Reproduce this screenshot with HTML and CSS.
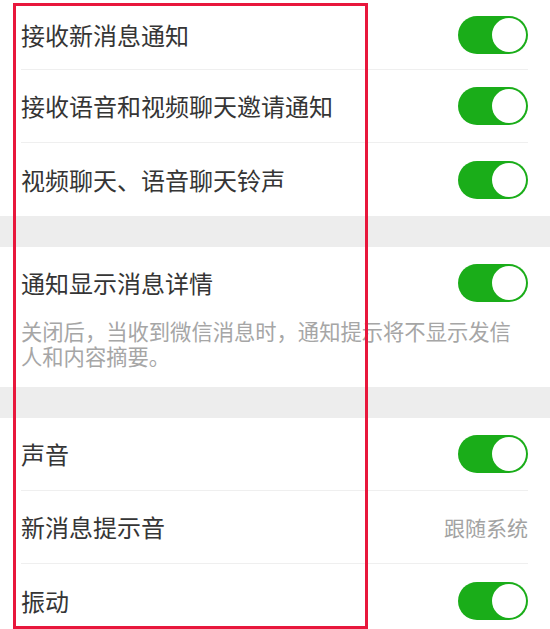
FILE: index.html
```html
<!DOCTYPE html>
<html lang="zh-CN">
<head>
<meta charset="utf-8">
<title>新消息通知</title>
<link rel="stylesheet" href="styles.css">
</head>
<body>
<div class="page">
  <section class="group">
    <div class="row row-first">
      <span class="label">接收新消息通知</span>
      <span class="switch on"><span class="knob"></span></span>
    </div>
    <div class="row">
      <span class="label">接收语音和视频聊天邀请通知</span>
      <span class="switch on"><span class="knob"></span></span>
    </div>
    <div class="row row-last">
      <span class="label">视频聊天、语音聊天铃声</span>
      <span class="switch on"><span class="knob"></span></span>
    </div>
  </section>
  <div class="gap gap-a"></div>
  <section class="group">
    <div class="row row-title">
      <span class="label">通知显示消息详情</span>
      <span class="switch on"><span class="knob"></span></span>
    </div>
    <p class="desc">关闭后，当收到微信消息时，通知提示将不显示发信人和内容摘要。</p>
  </section>
  <div class="gap gap-b"></div>
  <section class="group">
    <div class="row">
      <span class="label">声音</span>
      <span class="switch on"><span class="knob"></span></span>
    </div>
    <div class="row">
      <span class="label">新消息提示音</span>
      <span class="value">跟随系统</span>
    </div>
    <div class="row row-last">
      <span class="label">振动</span>
      <span class="switch on"><span class="knob"></span></span>
    </div>
  </section>
  <div class="highlight"></div>
</div>
</body>
</html>
```

FILE: styles.css
```css
html, body {
  margin: 0;
  padding: 0;
  background: #ffffff;
}

body {
  font-family: "Noto Sans CJK SC", "Noto Sans", sans-serif;
  color: #353535;
}

.page {
  position: relative;
  width: 550px;
  height: 629px;
  overflow: hidden;
  background: #ffffff;
}

.group {
  padding: 0 22px 0 21px;
  background: #ffffff;
}

.row {
  height: 72px;
  display: flex;
  align-items: center;
  justify-content: space-between;
  border-bottom: 1px solid #efefef;
}

.row-first {
  height: 69px;
}

.row-last {
  height: 73px;
  border-bottom: none;
}

.row-title {
  height: 72px;
  border-bottom: none;
}

.label {
  font-size: 24px;
  line-height: 30px;
  color: #353535;
  white-space: nowrap;
}

.value {
  font-size: 21px;
  line-height: 28px;
  color: #a3a3a3;
}

.switch {
  position: relative;
  width: 70px;
  height: 38px;
  border-radius: 19px;
  background: #1aad19;
  flex: none;
}

.switch .knob {
  position: absolute;
  top: 2px;
  right: 2px;
  width: 34px;
  height: 34px;
  border-radius: 50%;
  background: #ffffff;
}

.desc {
  margin: 0;
  padding: 0 0 19px 0;
  font-size: 21.3px;
  line-height: 24.5px;
  color: #a6a6a6;
}

.gap {
  background: #ededed;
}

.gap-a {
  height: 31px;
}

.gap-b {
  height: 31px;
}

.highlight {
  position: absolute;
  left: 13px;
  top: 3px;
  width: 355px;
  height: 626px;
  box-sizing: border-box;
  border: 3px solid #e8173c;
  pointer-events: none;
}
```
